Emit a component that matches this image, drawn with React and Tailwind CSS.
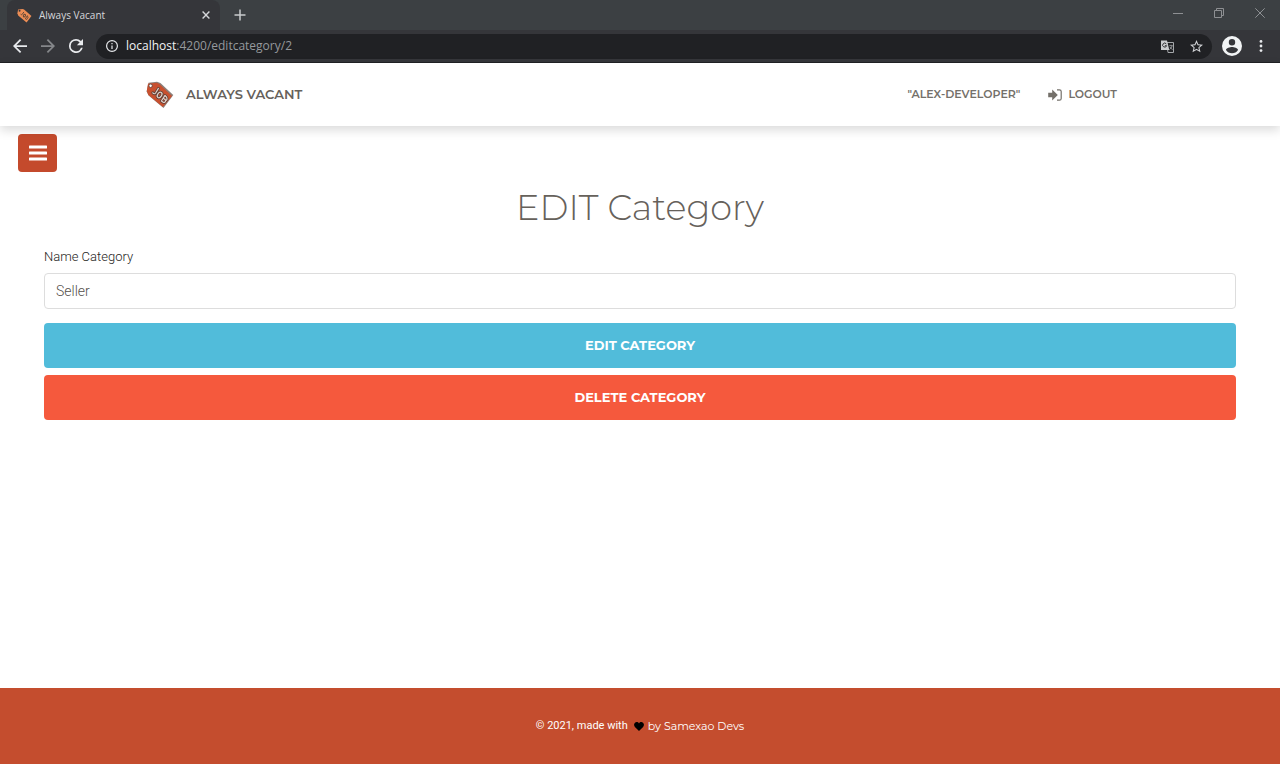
import React from "react";

function TagLogo({ className, body, edge, ink }) {
  return (
    <svg viewBox="0 0 28 28" className={className} aria-hidden="true">
      <path d="M2.5 1.8 11 .8l3.4 1.2 12.9 12-9.8 13L2.6 14.6.6 10.4z" fill={edge} />
      <path d="M2 2.8 10.4 1.7l2.8 1L26 15l-9.2 11L2.2 13.8.8 10z" fill={body} />
      <circle cx="4.6" cy="4.8" r="1.7" fill="#fff" stroke={ink} strokeWidth="0.8" />
      <g fill="none" stroke={ink} strokeWidth="2.8" strokeLinecap="round" strokeLinejoin="round">
        <path d="M12.4 7.4 9.6 12q-1.200 1.600-2.800-.2" />
        <ellipse cx="13.600" cy="14" rx="2" ry="3" transform="rotate(34 13.600 14)" />
        <path d="m19 14.400-3.600 5.600 1.500 1.100q2.400.9 2.700-1.500 2.200-.8 1-3.400z" />
      </g>
      <g fill="none" stroke="#e3d0c9" strokeWidth="1.2" strokeLinecap="round" strokeLinejoin="round">
        <path d="M12.4 7.4 9.6 12q-1.200 1.600-2.800-.2" />
        <ellipse cx="13.600" cy="14" rx="2" ry="3" transform="rotate(34 13.600 14)" />
        <path d="m19 14.400-3.600 5.600 1.500 1.100q2.400.9 2.700-1.500 2.200-.8 1-3.400zM17.300 17.100l2.300 1.900" />
      </g>
    </svg>
  );
}

function FaviconTag({ className }) {
  return (
    <svg viewBox="0 0 28 28" className={className} aria-hidden="true">
      <path d="M2 2.800 10.400 1.700l2.800 1L27 15l-9.200 12L2.200 13.800.8 10z" fill="#ec8d55" />
      <circle cx="4.800" cy="5.200" r="1.800" fill="#35363a" />
      <g fill="none" stroke="#5d4536" strokeWidth="1.800" strokeLinecap="round">
        <path d="M12.400 8 9.600 12q-1.200 1.400-2.400 0" />
        <ellipse cx="13.800" cy="14.200" rx="1.800" ry="2.600" transform="rotate(34 13.800 14.200)" />
        <path d="m19 15-3.400 5 1.500 1q2 .8 2.400-1.400 2-.6.800-3z" />
      </g>
    </svg>
  );
}

function TabStrip() {
  return (
    <div className="flex h-[30px] items-stretch bg-[#3c4043] pl-[7px]">
      <div className="flex w-[213px] items-center rounded-t-lg bg-[#35363a] pl-[10px] pr-[6px] text-[#d5d7da]">
        <FaviconTag className="h-[15px] w-[15px] shrink-0" />
        <span className="ml-[7px] flex-1 text-[10px] leading-4">Always Vacant</span>
        <button type="button" aria-label="Close tab" className="flex h-4 w-4 items-center justify-center">
          <svg viewBox="0 0 8 8" className="h-2 w-2" stroke="currentColor" strokeWidth="1.4">
            <path d="m.6.6 6.8 6.8M7.4.6.6 7.4" />
          </svg>
        </button>
      </div>
      <button type="button" aria-label="New tab" className="flex w-10 items-center justify-center text-[#c8cacd]">
        <svg viewBox="0 0 12 12" className="h-3 w-3" stroke="currentColor" strokeWidth="1.5">
          <path d="M6 .5v11M.5 6h11" />
        </svg>
      </button>
      <div className="ml-auto flex pb-[5px] text-[#8e9093]">
        <button type="button" aria-label="Minimize" className="flex w-[41px] items-center justify-center">
          <svg viewBox="0 0 10 10" className="h-[10px] w-[10px]" stroke="currentColor">
            <path d="M0 5.5h10" />
          </svg>
        </button>
        <button type="button" aria-label="Restore" className="flex w-[41px] items-center justify-center">
          <svg viewBox="0 0 10 10" className="h-[10px] w-[10px]" fill="none" stroke="currentColor">
            <path d="M.5 2.5h7v7h-7zM2.5 2.5v-2h7v7h-2" />
          </svg>
        </button>
        <button type="button" aria-label="Close window" className="flex w-[41px] items-center justify-center">
          <svg viewBox="0 0 10 10" className="h-[10px] w-[10px]" stroke="currentColor">
            <path d="m.3.3 9.4 9.4M9.7.3.3 9.7" />
          </svg>
        </button>
      </div>
    </div>
  );
}

function Toolbar() {
  return (
    <div className="flex h-[33px] items-center border-b border-[#202124] bg-[#35363a] pl-[13px] text-[#e8eaed]">
      <button type="button" aria-label="Back" className="mr-[14px]">
        <svg viewBox="4 4 16 16" className="block h-[14px] w-[14px]" fill="currentColor">
          <path d="M20 11H7.83l5.59-5.59L12 4l-8 8 8 8 1.41-1.41L7.83 13H20z" />
        </svg>
      </button>
      <button type="button" aria-label="Forward" className="mr-[14px] text-[#85878a]">
        <svg viewBox="4 4 16 16" className="block h-[14px] w-[14px]" fill="currentColor">
          <path d="m12 4-1.41 1.41L16.17 11H4v2h12.17l-5.58 5.59L12 20l8-8z" />
        </svg>
      </button>
      <button type="button" aria-label="Reload" className="mr-[13px]">
        <svg viewBox="4 4 16 16" className="block h-[14px] w-[14px]" fill="currentColor">
          <path d="M17.65 6.35A7.96 7.96 0 0 0 12 4a8 8 0 1 0 7.73 10h-2.08A6 6 0 1 1 12 6c1.66 0 3.14.69 4.22 1.78L13 11h7V4z" />
        </svg>
      </button>
      <div className="flex h-[25px] flex-1 items-center rounded-full bg-[#202124] pl-[10px] pr-[9px]">
        <svg viewBox="2 2 20 20" className="h-3 w-3 shrink-0" fill="currentColor">
          <path d="M11 7h2v2h-2zm0 4h2v6h-2zm1-9a10 10 0 1 0 0 20 10 10 0 0 0 0-20m0 18a8 8 0 1 1 0-16 8 8 0 0 1 0 16" />
        </svg>
        <span className="ml-2 flex-1 text-[12px] leading-4 text-[#96999d]">
          <span className="text-[#f1f3f4]">localhost</span>:4200/editcategory/2
        </span>
        <button type="button" aria-label="Translate this page" className="mr-4">
          <svg viewBox="0 0 13 13" className="block h-[13px] w-[13px]">
            <path d="M5.5 2.500h7v10H7z" fill="none" stroke="#a4a7aa" />
            <path d="M8.300 5.700h3.400M10 4.800v.9M11.200 5.700q-.6 2.400-2.700 3.800M9 7q1 1.800 2.600 2.500" fill="none" stroke="#a4a7aa" strokeWidth="0.8" />
            <path d="M0 .5h6l2.300 9.500H0z" fill="#c9cbce" />
            <path d="M5.300 3.900a2 2 0 1 0 .3 1.800H3.900" fill="none" stroke="#303134" strokeWidth="1" />
          </svg>
        </button>
        <button type="button" aria-label="Bookmark this page">
          <svg viewBox="2 2 20 20" className="block h-[13px] w-[13px]" fill="#d0d2d5">
            <path d="m22 9.24-7.19-.62L12 2 9.19 8.63 2 9.24l5.46 4.73L5.82 21 12 17.27 18.18 21l-1.63-7.03zM12 15.4l-3.76 2.27 1-4.28-3.32-2.88 4.38-.38L12 6.1l1.71 4.04 4.38.38-3.32 2.88 1 4.28z" />
          </svg>
        </button>
      </div>
      <button type="button" aria-label="Profile" className="ml-[10px]">
        <svg viewBox="2 2 20 20" className="block h-5 w-5" fill="#f1f3f4">
          <path d="M12 2a10 10 0 1 0 0 20 10 10 0 0 0 0-20m0 3a3.2 3.2 0 1 1 0 6.4A3.2 3.2 0 0 1 12 5m0 14.2a7.2 7.2 0 0 1-6-3.22c.03-1.99 4-3.08 6-3.08s5.97 1.09 6 3.08a7.2 7.2 0 0 1-6 3.22" />
        </svg>
      </button>
      <button type="button" aria-label="Browser menu" className="mx-[17px]">
        <svg viewBox="0 0 4 14" className="block h-[14px] w-1" fill="currentColor">
          <circle cx="2" cy="2.4" r="1.4" />
          <circle cx="2" cy="7" r="1.4" />
          <circle cx="2" cy="11.6" r="1.4" />
        </svg>
      </button>
    </div>
  );
}

function Navbar() {
  return (
    <nav className="relative h-[63px] bg-white shadow-[0_4px_10px_rgba(0,0,0,0.15)]">
      <div className="mx-auto flex h-full max-w-[988px] items-center pr-[17px] font-['Montserrat','Inter',sans-serif] text-[#66615b]">
        <a href="#home" className="flex items-center gap-3 text-[13px] font-semibold">
          <TagLogo className="h-7 w-7" body="#c8502f" edge="#8a7f7a" ink="#5c4038" />
          ALWAYS VACANT
        </a>
        <div className="ml-auto flex items-center gap-7 text-[11px] font-semibold text-[#74706a]">
          <a href="#profile">"ALEX-DEVELOPER"</a>
          <a href="#logout" className="flex items-center gap-[6px]">
            <svg viewBox="0 0 14 12" className="h-3 w-[14px]">
              <path d="M.2 3.800h4V.6L9.800 6l-5.600 5.400V8.200h-4z" fill="currentColor" />
              <path d="M9 .8h2.400q1.800 0 1.800 1.800v6.800q0 1.800-1.800 1.800H9" fill="none" stroke="currentColor" strokeWidth="1.2" />
            </svg>
            LOGOUT
          </a>
        </div>
      </div>
    </nav>
  );
}

export default function App() {
  return (
    <div className="flex min-h-screen flex-col bg-white">
      <header className="font-['Segoe_UI','Open_Sans',sans-serif]">
        <TabStrip />
        <Toolbar />
      </header>
      <Navbar />
      <main className="flex-1 pt-2">
        <button type="button" aria-label="Toggle menu" className="ml-[18px] flex h-[38px] w-[39px] items-center justify-center rounded bg-[#c44a2c]">
          <svg viewBox="0 0 18 16" className="h-4 w-[18px]" fill="#fff">
            <rect y="0.5" width="18" height="3" rx="0.6" />
            <rect y="6.5" width="18" height="3" rx="0.6" />
            <rect y="12.5" width="18" height="3" rx="0.6" />
          </svg>
        </button>
        <form className="flex flex-col px-11 pt-3" onSubmit={(e) => e.preventDefault()}>
          <h1 className="text-center font-['Montserrat','Inter',sans-serif] text-[35px] leading-[48px] font-light text-[#66615b]">
            EDIT Category
          </h1>
          <label htmlFor="category-name" className="mt-[15px] font-['Roboto',sans-serif] text-[13px] leading-5 font-light text-[#252422]">
            Name Category
          </label>
          <input
            id="category-name"
            type="text"
            defaultValue="Seller"
            className="mt-[6px] h-9 rounded border border-[#dddddd] bg-white px-[11px] font-['Roboto',sans-serif] text-[14px] font-light text-[#55504b] outline-none"
          />
          <button type="submit" className="mt-[14px] h-[45px] rounded bg-[#51bcda] font-['Montserrat','Inter',sans-serif] text-[13px] font-bold text-white">
            EDIT CATEGORY
          </button>
          <button type="button" className="mt-[7px] h-[45px] rounded bg-[#f5593d] font-['Montserrat','Inter',sans-serif] text-[13px] font-bold text-white">
            DELETE CATEGORY
          </button>
        </form>
      </main>
      <footer className="flex h-[76px] items-center justify-center bg-[#c44d2e] text-[11px] leading-5 text-white">
        <span className="font-['Roboto',sans-serif]">© 2021, made with</span>
        <svg viewBox="0 0 10 9" className="mr-1 ml-[6px] h-[9px] w-[10px]" fill="#000">
          <path d="M5 9 .9 4.9C-.3 3.6-.2 1.700 1 .7 2.300-.4 4.200 0 5 1.500 5.800 0 7.700-.4 9 .7c1.200 1 1.300 2.900.1 4.200z" />
        </svg>
        <span className="font-['Montserrat','Inter',sans-serif]">by Samexao Devs</span>
      </footer>
    </div>
  );
}
